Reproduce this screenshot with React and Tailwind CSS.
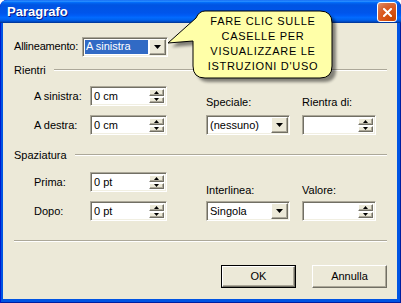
import React from "react"

const raised = "bg-[#ECE9D8] border border-t-white border-l-white border-b-[#716F64] border-r-[#716F64] shadow-[inset_-1px_-1px_0_#ACA899]"
const sunken = "bg-white border border-t-[#ACA899] border-l-[#ACA899] border-b-white border-r-white shadow-[inset_1px_1px_0_#716F64,inset_-1px_-1px_0_#F1EFE2]"

function Arrow({ up }) {
  return (
    <svg width="5" height="3" viewBox="0 0 5 3">
      <path d={up ? "M2.5 0 L5 3 L0 3 Z" : "M0 0 L5 0 L2.5 3 Z"} fill="#000" />
    </svg>
  )
}

function Spin({ value, width }) {
  return (
    <div className={`${sunken} h-[20px] flex items-stretch p-[1px]`} style={{ width }}>
      <div className="flex-1 flex items-center pl-[2px] text-[11px] leading-none">{value}</div>
      <div className="w-[16px] flex flex-col gap-[1px] py-[1px] pr-[1px]">
        <div className={`${raised} flex-1 flex items-center justify-center`}>
          <Arrow up />
        </div>
        <div className={`${raised} flex-1 flex items-center justify-center`}>
          <Arrow />
        </div>
      </div>
    </div>
  )
}

function Select({ value, width, selected }) {
  return (
    <div className={`${sunken} h-[20px] flex items-stretch p-[1px]`} style={{ width }}>
      <div className="flex-1 flex items-stretch p-[1px]">
        <div
          className={`flex-1 flex items-center pl-[1px] text-[11px] leading-none ${
            selected ? "bg-[#316AC5] text-white" : "text-black"
          }`}
        >
          {value}
        </div>
      </div>
      <div className={`${raised} w-[17px] flex items-center justify-center`}>
        <svg width="7" height="4" viewBox="0 0 7 4">
          <path d="M0 0 L7 0 L3.5 4 Z" fill="#000" />
        </svg>
      </div>
    </div>
  )
}

function Header({ label }) {
  return (
    <div className="h-[14px] flex items-center">
      <span className="text-[11px] leading-none">{label}</span>
      <div className="flex-1 ml-[8px] border-t border-t-[#ACA899] border-b border-b-white"></div>
    </div>
  )
}

function FieldRow({ label, value }) {
  return (
    <div className="flex items-center h-[20px]">
      <span className="w-[56px] text-[11px] leading-none">{label}</span>
      <Spin value={value} width={77} />
    </div>
  )
}

function Balloon() {
  const d =
    "M45 5 H160 Q172 5 172 17 V60 Q172 72 160 72 H45 Q33 72 33 60 V35 L8 37 L36 12 Q39 5 45 5 Z"
  return (
    <div className="absolute left-[160px] top-[6px] w-[182px] h-[84px] pointer-events-none">
      <svg width="182" height="84" viewBox="0 0 182 84" className="absolute inset-0">
        <defs>
          <filter id="blur" x="-10%" y="-10%" width="130%" height="130%">
            <feGaussianBlur stdDeviation="1.5" />
          </filter>
        </defs>
        <path d={d} transform="translate(4 4)" fill="#000" opacity="0.45" filter="url(#blur)" />
        <path d={d} fill="#FFFFA8" stroke="#000" strokeWidth="1" />
      </svg>
      <div className="absolute left-[33px] top-[8px] w-[140px] text-center text-[11px] leading-[15px] tracking-[0.7px] text-black">
        <div>FARE CLIC SULLE</div>
        <div>CASELLE PER</div>
        <div>VISUALIZZARE LE</div>
        <div>ISTRUZIONI D'USO</div>
      </div>
    </div>
  )
}

export default function App() {
  return (
    <div className="w-[401px] h-[303px] bg-white font-['Liberation_Sans',sans-serif] text-black">
      <div className="relative w-[401px] h-[303px] flex flex-col rounded-t-[7px] bg-[#0054E3] shadow-[inset_1px_0_0_#0019CF,inset_-1px_0_0_#001EA0,inset_0_-1px_0_#001EA0] overflow-hidden">
        <div className="h-[23px] flex items-center justify-between pl-[7px] pr-[4px] rounded-t-[7px] bg-[linear-gradient(to_bottom,#0058EE_0%,#3593FF_4%,#288EFF_6%,#127DFF_8%,#036FFC_10%,#0262EE_14%,#0057E5_20%,#0054E3_24%,#0055EB_56%,#005BF5_66%,#026AFE_76%,#0062EF_86%,#0052D6_92%,#0040AB_96%,#003092_100%)]">
          <span className="text-white font-bold text-[13px] leading-none [text-shadow:1px_1px_#0A1883]">Paragrafo</span>
          <div className="w-[20px] h-[20px] rounded-[3px] border border-white bg-[radial-gradient(circle_at_80%_90%,#CC4600_0%,#DC5A20_55%,#D5683A_70%,#E0845A_90%,#F0B090_100%)] flex items-center justify-center mt-[1px]">
            <svg width="9" height="9" viewBox="0 0 9 9">
              <path d="M1 1 L8 8 M8 1 L1 8" stroke="#fff" strokeWidth="2" strokeLinecap="square" />
            </svg>
          </div>
        </div>

        <div className="flex-1 ml-[3px] mr-[4px] mb-[4px] bg-[#ECE9D8] pl-[11px] pr-[10px] flex flex-col">
          <div className="mt-[14px] h-[19px] flex items-center">
            <span className="w-[68px] text-[11px] leading-none whitespace-nowrap tracking-[-0.2px]">Allineamento:</span>
            <Select value="A sinistra" width={86} selected />
          </div>

          <div className="mt-[7px]">
            <Header label="Rientri" />
          </div>

          <div className="flex mt-[9px]">
            <div className="ml-[20px] flex flex-col gap-[9px]">
              <FieldRow label="A sinistra:" value="0 cm" />
              <FieldRow label="A destra:" value="0 cm" />
            </div>
            <div className="ml-[39px] flex gap-[12px]">
              <div className="flex flex-col">
                <span className="mt-[9px] h-[14px] text-[11px] leading-[14px]">Speciale:</span>
                <div className="mt-[6px]">
                  <Select value="(nessuno)" width={84} />
                </div>
              </div>
              <div className="flex flex-col">
                <span className="mt-[9px] h-[14px] text-[11px] leading-[14px]">Rientra di:</span>
                <div className="mt-[6px]">
                  <Spin value="" width={74} />
                </div>
              </div>
            </div>
          </div>

          <div className="mt-[13px]">
            <Header label="Spaziatura" />
          </div>

          <div className="flex mt-[10px]">
            <div className="ml-[20px] flex flex-col gap-[9px]">
              <FieldRow label="Prima:" value="0 pt" />
              <FieldRow label="Dopo:" value="0 pt" />
            </div>
            <div className="ml-[39px] flex gap-[12px]">
              <div className="flex flex-col">
                <span className="mt-[11px] h-[14px] text-[11px] leading-[14px]">Interlinea:</span>
                <div className="mt-[4px]">
                  <Select value="Singola" width={84} />
                </div>
              </div>
              <div className="flex flex-col">
                <span className="mt-[11px] h-[14px] text-[11px] leading-[14px]">Valore:</span>
                <div className="mt-[4px]">
                  <Spin value="" width={74} />
                </div>
              </div>
            </div>
          </div>

          <div className="mt-[19px] border-t border-t-[#ACA899] border-b border-b-white"></div>

          <div className="mt-[23px] flex justify-end gap-[16px]">
            <div className="w-[75px] h-[23px] border border-black">
              <div className={`${raised} w-full h-full flex items-center justify-center text-[11px] leading-none`}>OK</div>
            </div>
            <div className={`${raised} w-[75px] h-[23px] flex items-center justify-center text-[11px] leading-none`}>
              Annulla
            </div>
          </div>
        </div>

        <Balloon />
      </div>
    </div>
  )
}
